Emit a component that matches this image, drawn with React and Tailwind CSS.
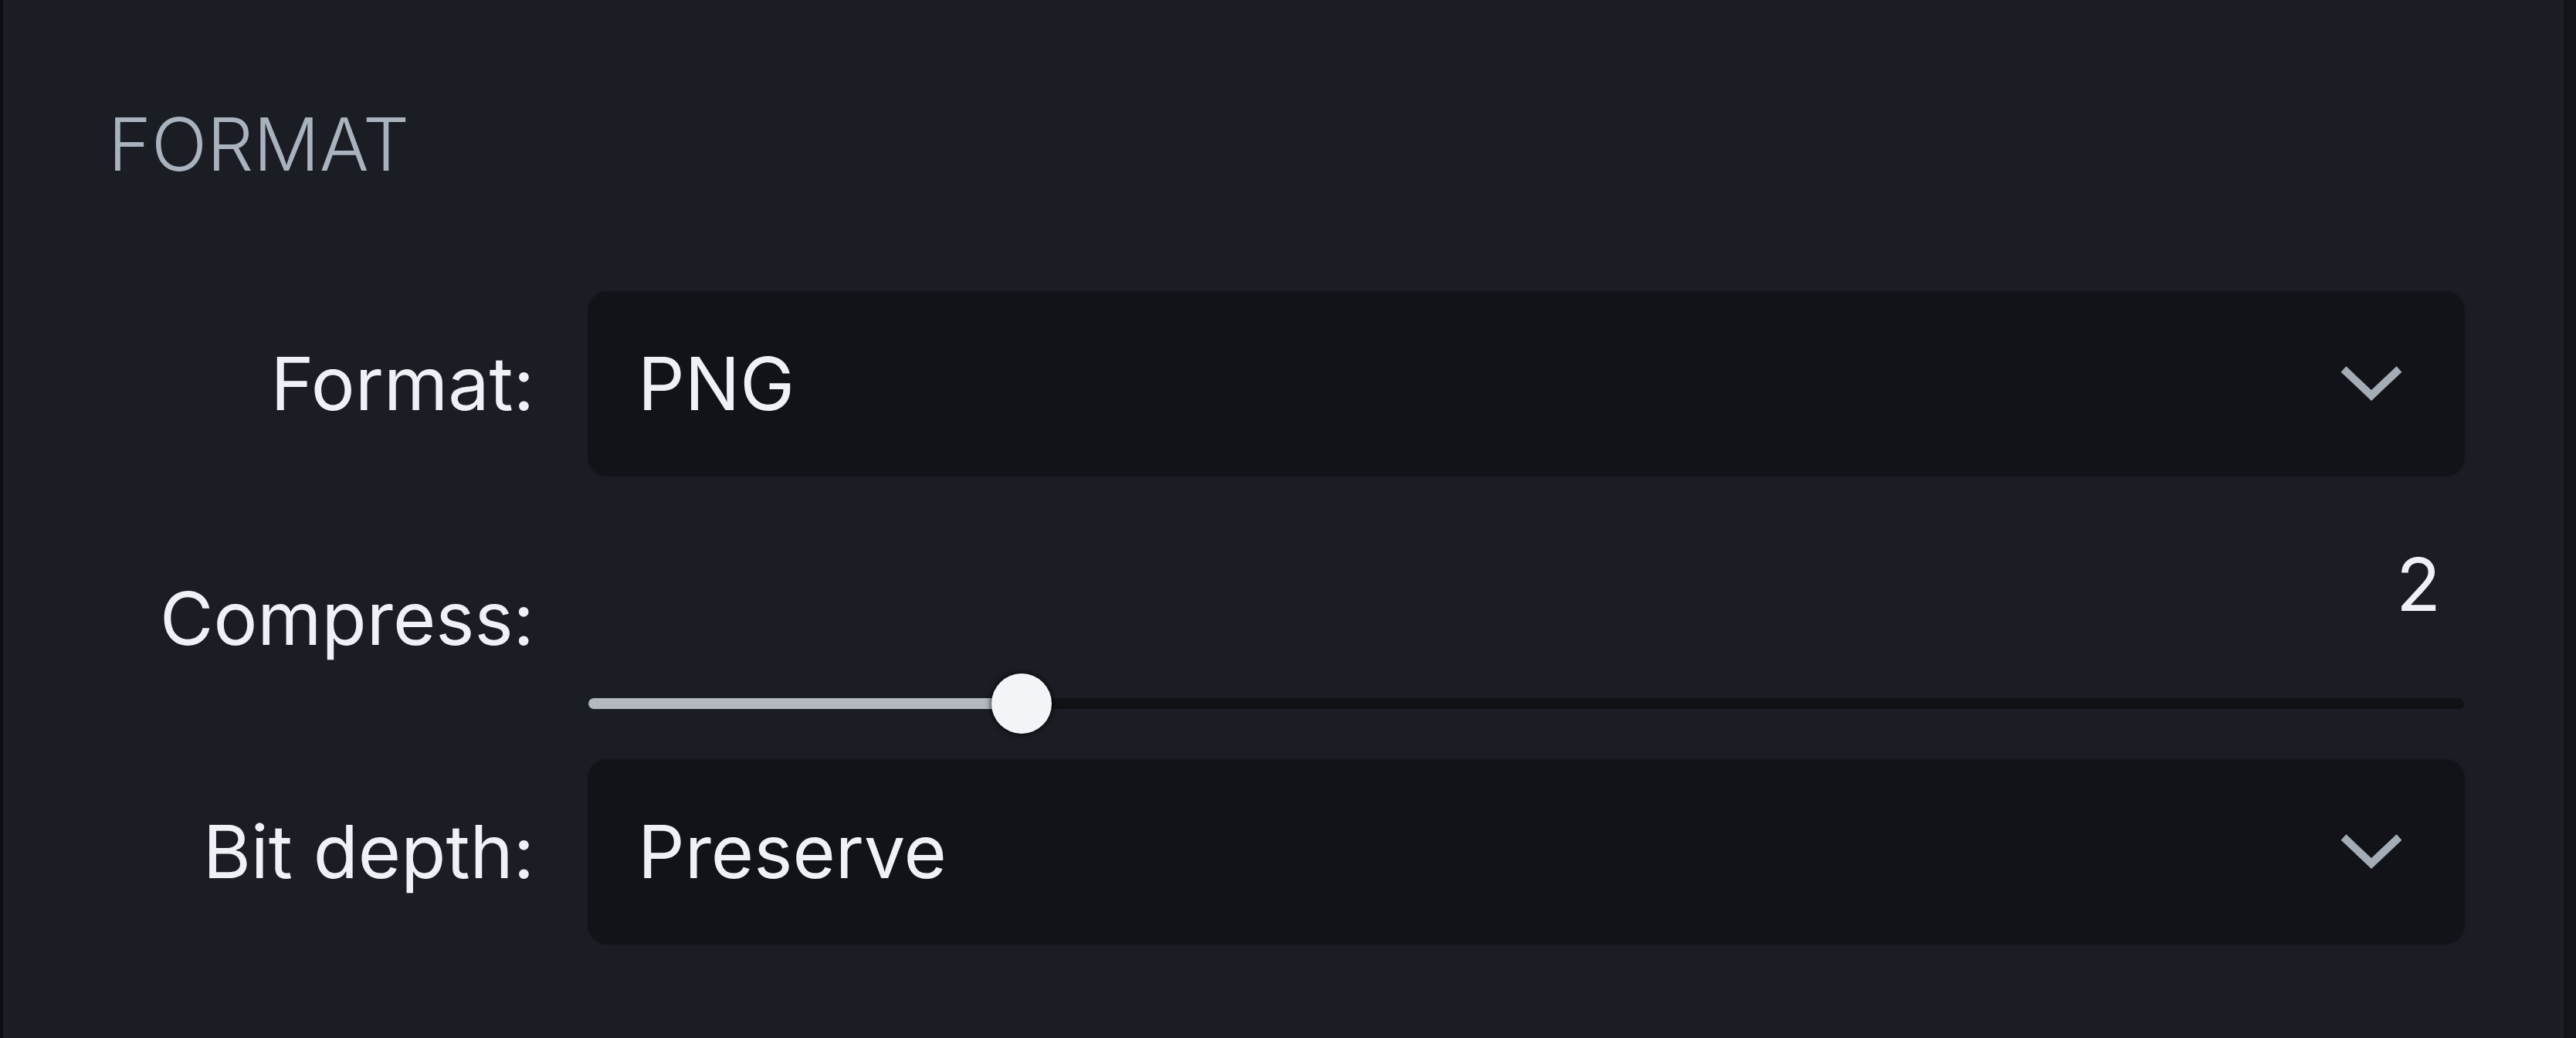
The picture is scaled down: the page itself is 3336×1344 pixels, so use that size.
import React from 'react';

function Chevron() {
  return (
    <svg width="80" height="48" viewBox="0 0 80 48" fill="none" className="shrink-0">
      <polyline points="4,5 40,39 76,5" stroke="#a4acb6" strokeWidth="10" strokeLinejoin="miter" strokeLinecap="butt" />
    </svg>
  );
}

function Select({ value }) {
  return (
    <div className="h-[238px] w-full rounded-[24px] bg-[#111318] flex items-center justify-between pl-[64px] pr-[80px] shadow-[0_0_0_2px_rgba(20,22,28,0.6)]">
      <span className="text-[95px] leading-[114px] text-[#eef2f7]">{value}</span>
      <Chevron />
    </div>
  );
}

// pct is where the thumb sits along the track
function Slider({ pct }) {
  return (
    <div className="relative h-[78px] w-full flex items-center">
      <div className="h-[14px] w-full rounded-full bg-[#0f1114]" />
      <div
        className="absolute left-0 top-1/2 -translate-y-1/2 h-[14px] rounded-full bg-[#b4b9c0]"
        style={{ width: `${pct}%` }}
      />
      <div
        className="absolute top-0 h-[78px] w-[78px] -translate-x-1/2 rounded-full bg-[#f3f4f7] shadow-[0_0_6px_2px_rgba(0,0,0,0.55)]"
        style={{ left: `${pct}%` }}
      />
    </div>
  );
}

export default function App() {
  return (
    <div className="w-[3336px] h-[1344px] flex bg-[#131419] font-['Inter','Liberation_Sans',sans-serif]">
      <div className="w-[4px] bg-[#0c0d10]" />
      <div className="w-[3316px] h-full bg-[#1b1d25] pt-[130px] pl-[139px] pr-[129px]">
        <h2 className="-ml-[3px] text-[95px] leading-[114px] font-light text-[#a9b3be]">FORMAT</h2>

        <div className="mt-[134px] grid grid-cols-[549px_1fr] gap-x-[70px]">
          <div className="flex items-center justify-end text-[95px] leading-[114px] text-[#eef2f7]">Format:</div>
          <Select value="PNG" />

          <div className="mt-[84px] pt-[44px] text-right text-[95px] leading-[114px] text-[#eef2f7]">Compress:</div>
          <div className="mt-[84px] flex flex-col">
            <div className="text-right pr-[30px] text-[95px] leading-[114px] text-[#eef2f7]">2</div>
            <div className="mt-[58px]">
              <Slider pct={23.1} />
            </div>
          </div>

          <div className="mt-[34px] flex items-center justify-end text-[95px] leading-[114px] text-[#eef2f7]">Bit depth:</div>
          <div className="mt-[34px]">
            <Select value="Preserve" />
          </div>
        </div>
      </div>
    </div>
  );
}
